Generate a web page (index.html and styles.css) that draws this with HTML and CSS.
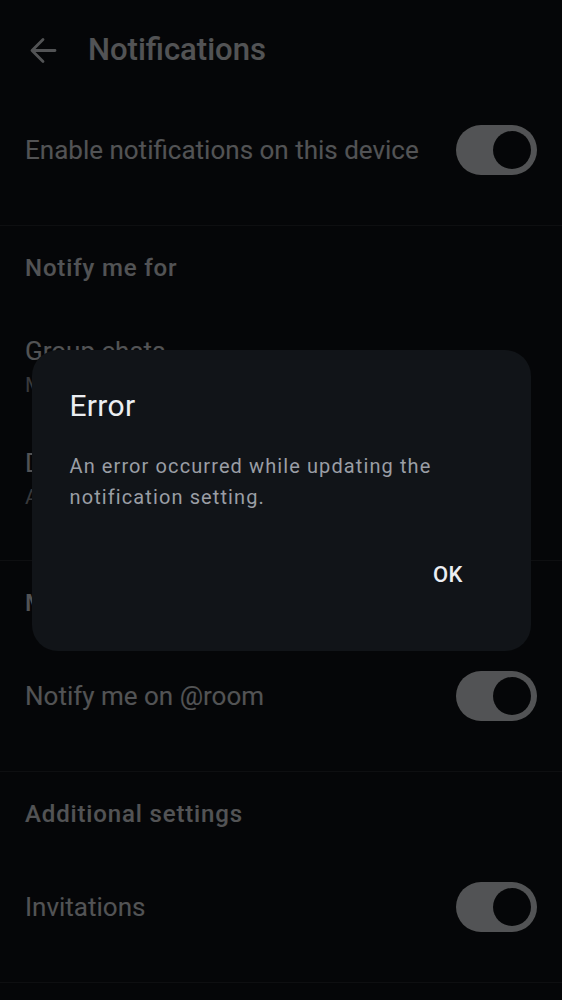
FILE: index.html
```html
<!DOCTYPE html>
<html lang="en">
<head>
<meta charset="utf-8">
<title>Notifications</title>
<link rel="stylesheet" href="styles.css">
</head>
<body>
<div class="screen">
  <header class="topbar">
    <svg class="back" viewBox="0 0 36 36" width="36" height="36" aria-hidden="true">
      <path d="M30 18.5H7.5M18 7.5L7 18.5L18 29.5" fill="none" stroke="currentColor" stroke-width="2.8" stroke-linecap="round" stroke-linejoin="round"/>
    </svg>
    <h1 class="title">Notifications</h1>
  </header>

  <section class="section section-top">
    <div class="row">
      <span class="label">Enable notifications on this device</span>
      <span class="switch on"><span class="thumb"></span></span>
    </div>
  </section>

  <section class="section">
    <h2 class="heading">Notify me for</h2>
    <div class="items">
      <div class="item2">
        <span class="label">Group chats</span>
        <span class="sub">Mentions and keywords only</span>
      </div>
      <div class="item2">
        <span class="label">Direct chats</span>
        <span class="sub">All messages</span>
      </div>
    </div>
  </section>

  <section class="section">
    <h2 class="heading">Mentions</h2>
    <div class="items">
      <div class="row">
        <span class="label">Notify me on @room</span>
        <span class="switch on"><span class="thumb"></span></span>
      </div>
    </div>
  </section>

  <section class="section">
    <h2 class="heading">Additional settings</h2>
    <div class="items">
      <div class="row">
        <span class="label">Invitations</span>
        <span class="switch on"><span class="thumb"></span></span>
      </div>
    </div>
  </section>

  <section class="section section-end"></section>
</div>

<div class="scrim">
  <div class="dialog" role="alertdialog">
    <h3 class="dialog-title">Error</h3>
    <p class="dialog-text">An error occurred while updating the notification setting.</p>
    <div class="dialog-actions">
      <button class="dialog-btn">OK</button>
    </div>
  </div>
</div>
</body>
</html>
```

FILE: styles.css
```css
* { box-sizing: border-box; }

html, body {
  margin: 0;
  padding: 0;
  background: #101317;
  height: 100%;
  overflow: hidden;
}

body {
  font-family: Roboto, "Noto Sans", "Liberation Sans", sans-serif;
  color: #ebeef2;
}

.screen {
  display: flex;
  flex-direction: column;
}

.topbar {
  height: 100px;
  display: flex;
  align-items: center;
  padding-left: 25px;
  gap: 27px;
}

.back {
  color: #ebeef2;
  flex: none;
}

.title {
  margin: 0;
  font-size: 31px;
  font-weight: 500;
  line-height: 36px;
  color: #ebeef2;
}

.section {
  border-top: 1px solid #2a2d33;
  padding: 28px 0 25px;
}

.section-top {
  border-top: none;
  padding: 0 0 25px;
}

.section-end {
  min-height: 40px;
}

.heading {
  margin: 0;
  padding: 0 25px;
  font-size: 24px;
  font-weight: 500;
  line-height: 28px;
  letter-spacing: 0.85px;
  color: #ebeef2;
}

.items {
  margin-top: 29px;
  display: flex;
  flex-direction: column;
}

.row {
  height: 100px;
  display: flex;
  align-items: center;
  justify-content: space-between;
  padding: 0 25px;
}

.label {
  font-size: 26px;
  line-height: 32px;
  letter-spacing: 0;
  color: #ebeef2;
}

.item2 {
  height: 112px;
  display: flex;
  flex-direction: column;
  justify-content: center;
  padding: 0 25px;
  gap: 3px;
}

.sub {
  font-size: 21px;
  line-height: 30px;
  letter-spacing: 0.5px;
  color: #a0a4ab;
}

.switch {
  width: 81px;
  height: 50px;
  border-radius: 25px;
  background: #ebeef2;
  display: flex;
  align-items: center;
  justify-content: flex-end;
  padding-right: 6px;
  flex: none;
}

.thumb {
  width: 38px;
  height: 38px;
  border-radius: 50%;
  background: #101317;
}

.scrim {
  position: fixed;
  inset: 0;
  background: rgba(0, 0, 0, 0.65);
  display: flex;
  align-items: center;
  justify-content: center;
}

.dialog {
  width: 499px;
  height: 301px;
  background: #111418;
  border-radius: 26px;
  padding: 38px 38px 0;
  display: flex;
  flex-direction: column;
}

.dialog-title {
  margin: 0;
  font-size: 30px;
  font-weight: 400;
  line-height: 36px;
  letter-spacing: 0.3px;
  color: #ebeef2;
}

.dialog-text {
  margin: 27px 0 0;
  font-size: 20px;
  line-height: 31px;
  letter-spacing: 1.1px;
  color: #9a9ea5;
}

.dialog-actions {
  display: flex;
  justify-content: flex-end;
  margin-top: 32px;
  margin-right: 6px;
}

.dialog-btn {
  background: none;
  border: none;
  padding: 17px 24px;
  font-family: Roboto, "Noto Sans", "Liberation Sans", sans-serif;
  font-size: 22px;
  font-weight: 500;
  line-height: 26px;
  letter-spacing: 0.2px;
  color: #ebeef2;
}
```
